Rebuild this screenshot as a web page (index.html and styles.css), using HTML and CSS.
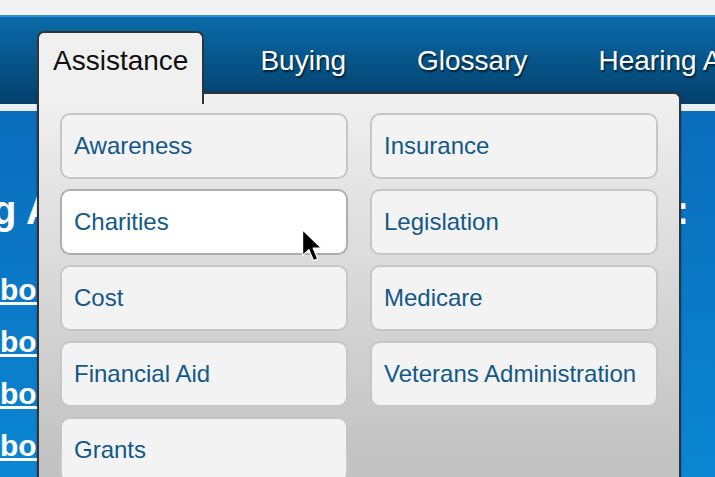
FILE: index.html
```html
<!DOCTYPE html>
<html>
   <head>
      <meta name="viewport" content="width=device-width, initial-scale=1">
      <link rel="stylesheet" href="styles.css">
   </head>
   <body>
      <div class="topbar"></div>

      <!--
      Main navigation with the open Assistance menu
      -->
      <div class="header">
         <ul class="mainnav">
            <li class="navitem active">Assistance</li>
            <li class="navitem">Buying</li>
            <li class="navitem">Glossary</li>
            <li class="navitem">Hearing Aids</li>
         </ul>

         <div class="dropdown">
            <a class="menubutton" href="#">Awareness</a>
            <a class="menubutton hover" href="#">Charities</a>
            <a class="menubutton" href="#">Cost</a>
            <a class="menubutton" href="#">Financial Aid</a>
            <a class="menubutton" href="#">Grants</a>
            <a class="menubutton" href="#">Insurance</a>
            <a class="menubutton" href="#">Legislation</a>
            <a class="menubutton" href="#">Medicare</a>
            <a class="menubutton" href="#">Veterans Administration</a>
         </div>

         <!-- mouse pointer over Charities -->
         <svg class="cursor" width="23" height="36" viewBox="0 0 22 34">
            <path d="M1.5,1.5 L1.5,26 L7.5,20.5 L12,31 L16,29.3 L11.6,19 L19.5,19 Z" />
         </svg>
      </div>
      <div class="strip"></div>

      <!--
      Page content behind the menu
      -->
      <div class="content">
         <h1 class="pagetitle"><span>g Aids for Everyone</span><span>:</span></h1>
         <ul class="links">
            <li><a href="#">books about hearing loss</a></li>
            <li><a href="#">bone conduction aids</a></li>
            <li><a href="#">bought online</a></li>
            <li><a href="#">borrowing a hearing aid</a></li>
         </ul>
      </div>
   </body>
</html>
```

FILE: styles.css
```css
html, body {
   overflow : hidden;
}

body {
   margin : 0;
   font-family : "Liberation Sans", Arial, Helvetica, sans-serif;
   background-color : #0a86d2;
}

.topbar {
   height : 15px;
   background-color : #f3f3f3;
   border-bottom : 2px solid #2790d8;
}

.header {
   position : relative;
   height : 87px;
   background : linear-gradient(to bottom, #0b6aa8, #03406c);
}

.mainnav {
   display : flex;
   align-items : flex-start;
   gap : 41px;
   list-style : none;
   margin : 0;
   padding : 14px 0 0 38px;
}

.navitem {
   position : relative;
   height : 73px;
   box-sizing : border-box;
   padding : 13px 15px 0 15px;
   font-size : 28px;
   line-height : 34px;
   color : #ffffff;
   text-shadow : 1px 2px 2px rgba(0, 0, 0, 0.65);
   white-space : nowrap;
}

.navitem.active {
   z-index : 3;
   margin-left : -1px;
   padding : 11px 14px 0 14px;
   color : #111111;
   text-shadow : none;
   background-color : #f0f0f0;
   border : 2px solid #2f3439;
   border-bottom : none;
   border-radius : 7px 7px 0 0;
}

.dropdown {
   position : absolute;
   z-index : 2;
   left : 37px;
   top : 75px;
   width : 644px;
   height : 385px;
   box-sizing : border-box;
   padding : 19px 21px;
   background : linear-gradient(to bottom, #f0f0f0, #c2c2c2 96%);
   border : 2px solid #2f3439;
   border-bottom : none;
   border-radius : 0 7px 0 0;
   display : grid;
   grid-template-columns : 288px 288px;
   grid-template-rows : repeat(5, 66px);
   grid-auto-flow : column;
   column-gap : 22px;
   row-gap : 10px;
   box-shadow : 0 0 2px rgba(0, 0, 0, 0.4);
}

.menubutton {
   display : flex;
   align-items : center;
   box-sizing : border-box;
   padding : 0 12px;
   font-size : 24px;
   color : #145886;
   text-decoration : none;
   background-color : #f3f3f3;
   border : 2px solid #c6c6c6;
   border-radius : 10px;
}

.menubutton.hover {
   background-color : #ffffff;
   border-color : #aeaeae;
}

.cursor {
   position : absolute;
   z-index : 4;
   left : 301px;
   top : 211px;
}

.cursor path {
   fill : #000000;
   stroke : #ffffff;
   stroke-width : 1.2px;
   stroke-linejoin : round;
}

.strip {
   height : 7px;
   background-color : #e9eef3;
}

.content {
   height : 366px;
   background : linear-gradient(to bottom, #0a6dbc, #0a86d2);
   overflow : hidden;
}

.pagetitle {
   display : flex;
   justify-content : space-between;
   margin : 0 0 0 -8px;
   padding : 75px 26px 0 0;
   font-size : 40px;
   line-height : 48px;
   color : #ffffff;
   white-space : nowrap;
}

.links {
   list-style : none;
   margin : 30px 0 0 0;
   padding : 0;
}

.links li {
   font-size : 30px;
   line-height : 52px;
   font-weight : bold;
   white-space : nowrap;
}

.links a {
   color : #ffffff;
}
```
